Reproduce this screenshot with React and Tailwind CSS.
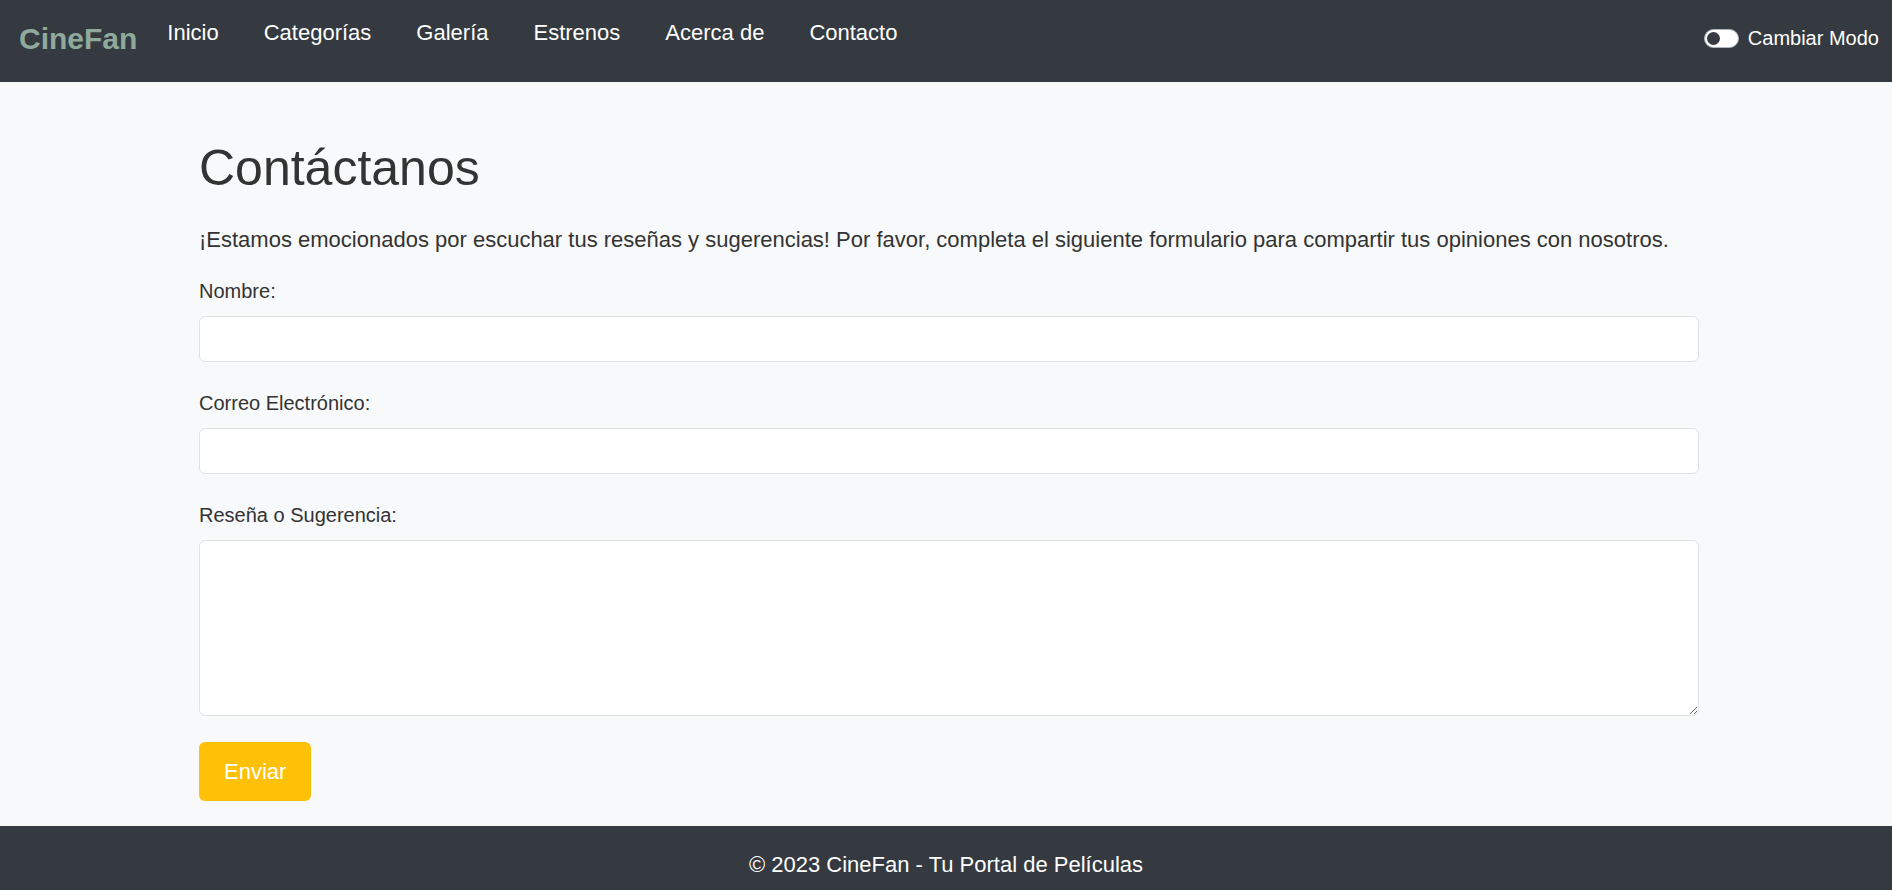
import { useState } from 'react';

const links = ['Inicio', 'Categorías', 'Galería', 'Estrenos', 'Acerca de', 'Contacto'];

function Navbar() {
  const [dark, setDark] = useState(false);

  return (
    <nav className="h-[82px] bg-[#343a40] flex items-start">
      <a href="#" className="ml-[19px] mt-[21px] text-[30px] leading-[36px] font-bold text-[#8fa99b]">
        CineFan
      </a>
      <ul className="flex gap-[45px] ml-[30px] mt-[16px]">
        {links.map((link) => (
          <li key={link}>
            <a href="#" className="text-[22px] leading-[33px] text-white">
              {link}
            </a>
          </li>
        ))}
      </ul>
      <div className="ml-auto mr-[13px] mt-[23px] flex items-center gap-[9px]">
        <button
          onClick={() => setDark(!dark)}
          className="w-[35px] h-[19px] rounded-full bg-white border border-[#adb5bd] flex items-center px-[2px]"
        >
          <span className="w-[13px] h-[13px] rounded-full bg-[#343a40]" />
        </button>
        <span className="text-[20px] leading-[30px] text-white">Cambiar Modo</span>
      </div>
    </nav>
  );
}

function Field({ label, children }) {
  return (
    <div className="mb-[26px]">
      <label className="block text-[20px] leading-[30px] mb-[10px]">{label}</label>
      {children}
    </div>
  );
}

export default function App() {
  return (
    <div className="min-h-screen bg-[#f8f9fa] text-[#333333] font-['Liberation_Sans',Arial,sans-serif]">
      <Navbar />

      <main className="max-w-[1506px] mx-auto pl-[6px] pt-[56px] pb-[25px]">
        <h1 className="text-[50px] leading-[60px]">Contáctanos</h1>
        <p className="mt-[25px] mb-[20px] text-[22px] leading-[33px]">
          ¡Estamos emocionados por escuchar tus reseñas y sugerencias! Por favor, completa el siguiente formulario para compartir tus opiniones con nosotros.
        </p>

        <form onSubmit={(e) => e.preventDefault()}>
          <Field label="Nombre:">
            <input type="text" className="w-full h-[46px] bg-white border border-[#dee2e6] rounded-[6px] px-3 text-[20px]" />
          </Field>
          <Field label="Correo Electrónico:">
            <input type="email" className="w-full h-[46px] bg-white border border-[#dee2e6] rounded-[6px] px-3 text-[20px]" />
          </Field>
          <Field label="Reseña o Sugerencia:">
            <textarea className="block w-full h-[176px] bg-white border border-[#dee2e6] rounded-[6px] px-3 py-2 text-[20px]" />
          </Field>
          <button type="submit" className="bg-[#ffc107] text-white text-[22px] leading-[33px] px-[25px] py-[13px] rounded-[6px]">
            Enviar
          </button>
        </form>
      </main>

      <footer className="bg-[#343a40] text-white text-center text-[22px] leading-[33px] pt-[22px] pb-[22px]">
        © 2023 CineFan - Tu Portal de Películas
      </footer>
    </div>
  );
}
